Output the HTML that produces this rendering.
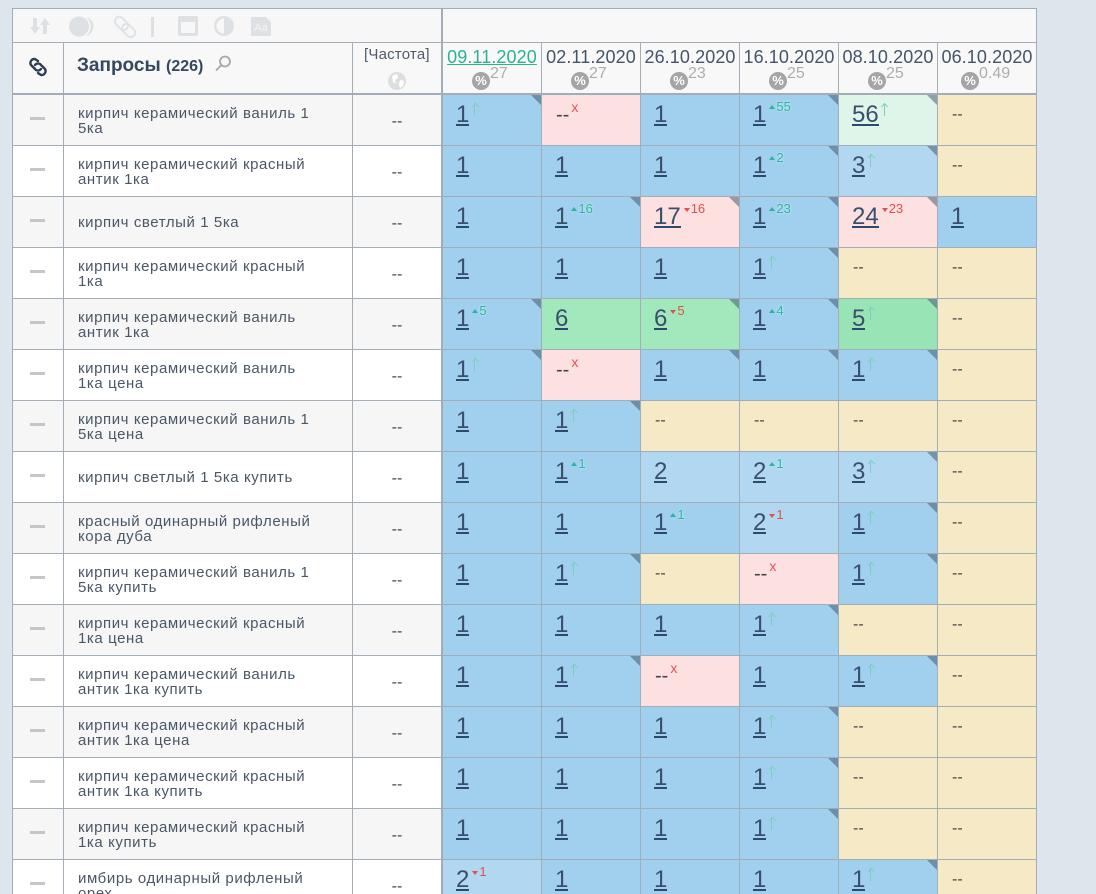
<!DOCTYPE html>
<html><head><meta charset="utf-8"><style>
*{box-sizing:border-box}
html,body{margin:0;padding:0;width:1096px;height:894px;overflow:hidden;background:#dde6ed;font-family:"Liberation Sans",sans-serif;color:#34495e}
#w{position:relative;width:1096px;height:894px;overflow:hidden}
.abs{position:absolute}
.tb{left:12px;top:8px;width:431px;height:35px;background:#f7f7f7;border:1px solid #a3adb7;border-right:2px solid #a3adb7}
.tb2{left:443px;top:8px;width:594px;height:35px;background:#f8f8f9;border:1px solid #a3adb7;border-left:0}
.hd{left:12px;top:42px;width:1025px;height:53px;background:#f8f8f9;border:1px solid #a3adb7;border-top:1px solid #a3adb7;border-bottom:2px solid #a3adb7}
.vl{top:43px;height:50px;width:1px;background:#a3adb7}
.d{top:46px;width:98px;text-align:center;font-size:18px;line-height:22px;color:#44546a;white-space:nowrap;letter-spacing:.1px}
.d.on{color:#2ab391;text-decoration:underline}
.pc{top:72px;width:18px;height:18px;border-radius:50%;background:#a5a5a5;color:#fff;font-size:13px;font-weight:bold;line-height:18px;text-align:center}
.pn{top:65px;font-size:16px;line-height:18px;color:#adadad}
.r{position:absolute;left:12px;width:1025px;height:51px;display:flex;background:#fff;border-bottom:1px solid #a3adb7;border-left:1px solid #a3adb7}
.r.o{background:#f6f6f6}
.k{width:51px;border-right:1px solid #a3adb7;position:relative}
.k:after{content:"";position:absolute;left:17px;top:22px;width:15px;height:3px;background:#c6c6c6}
.q{width:289px;border-right:1px solid #a3adb7;padding:1px 0 0 14px;display:flex;align-items:center;font-size:15px;line-height:15px;letter-spacing:.58px;color:#4a5766;white-space:nowrap}
.f{width:90px;border-right:2px solid #a3adb7;text-align:center;font-size:16px;line-height:54px;color:#444}
.c{width:99px;height:50px;position:relative;display:flex;align-items:flex-start;padding:6px 0 0 13px;white-space:nowrap;border-right:1px solid #a3adb7;background:#a1cfee}
.lb{background:#b2d7f1}.p{background:#fde0e0}.y{background:#f5e9c6}.g{background:#a2e8bd}.h{background:#98e4b4}.m{background:#dff5ea}
.c.y,.c.e{padding-left:14px}
.t:after{content:"";position:absolute;right:0;top:0;border-top:10px solid rgba(60,80,100,.5);border-left:10px solid transparent}
u{display:block;height:23px;font-size:24px;line-height:28px;text-decoration:none;border-bottom:2px solid #2c4a6e;color:#3a4f6c;box-sizing:content-box}
.y span{font-size:16px;line-height:20px;margin-top:4px;color:#444}
.e span{font-size:20px;line-height:24px;margin-top:2px;color:#444}
em{font-style:normal;display:block}
.x{color:#e8505b;font-size:14px;line-height:14px;margin:-1px 0 0 2px}
.a{position:relative;width:7px;height:13px;margin:2px 0 0 2px}
.a:before{content:"";position:absolute;left:3px;top:0;width:1px;height:13px;background:#7ccfc0}
.a:after{content:"";position:absolute;left:1.500px;top:.5px;width:4px;height:4px;border-left:1px solid #7ccfc0;border-top:1px solid #7ccfc0;transform:rotate(45deg)}
.v,.w{font-size:13px;line-height:14px;margin:-1px 0 0 3px;display:flex;align-items:flex-start}
.v{color:#2bb5a0;text-shadow:0 0 2px #d8fff4}
.w{color:#e0504c}
.v:before{content:"";margin:5px 1px 0 0;border-bottom:4px solid #2bb5a0;border-left:3px solid transparent;border-right:3px solid transparent}
.w:before{content:"";margin:6px 1px 0 0;border-top:4px solid #e0504c;border-left:3px solid transparent;border-right:3px solid transparent}
</style></head><body><div id="w">
<div class="abs tb"></div><div class="abs tb2"></div>
<div class="abs hd"></div>
<div class="abs" style="left:441px;top:8px;width:2px;height:87px;background:#a3adb7"></div>
<svg class="abs" style="left:0;top:0" width="300" height="94" fill="none">
<g fill="#dee1e3">
<path d="M33 18h4v9h3l-5 7-5-7h3z"/><path d="M43 34h4v-9h3l-5-7-5 7h3z"/>
<circle cx="79" cy="26.5" r="10"/><path d="M86 17a11 10 0 0 1 0 19a12 12 0 0 0 0-19z"/>
<rect x="151" y="17" width="3" height="20"/>
<path fill-rule="evenodd" d="M180 16h16a2 2 0 0 1 2 2v16a2 2 0 0 1-2 2h-16a2 2 0 0 1-2-2v-16a2 2 0 0 1 2-2zm1 6v11h14v-11z"/>
<path fill-rule="evenodd" d="M224 16a10 10 0 1 1 0 20a10 10 0 0 1 0-20zm0 2.500a7.500 7.500 0 0 0 0 15z"/>
<path d="M251 17h15l5 5v14h-20z"/>
</g>
<g stroke="#e0e3e5" stroke-width="2" transform="rotate(-45 125 27)"><rect x="120.500" y="14.500" width="9" height="15" rx="4.500"/><rect x="120.500" y="24.500" width="9" height="15" rx="4.500"/></g>
<g stroke="#2c3e50" stroke-width="2.400" fill="none" stroke-linecap="round"><path d="M38 61l-3-2a4 4 0 0 0-4 6l5 5a4 4 0 0 0 5-1"/><path d="M38 73l3 2a4 4 0 0 0 4-6l-5-5a4 4 0 0 0-5 1"/></g>
<g stroke="#a8a8a8" stroke-width="1.800" fill="none"><circle cx="225" cy="61.500" r="5"/><path d="M221 65.500l-5 5"/></g>
</svg>
<div class="abs" style="left:251px;top:21px;width:20px;text-align:center;color:#f3f3f3;font-size:11px;line-height:15px">Aa</div>
<div class="abs" style="left:77px;top:54px;font-size:19px;line-height:24px;font-weight:bold;color:#34495e;white-space:nowrap">Запросы <span style="font-size:16px">(226)</span></div>
<div class="abs" style="left:364px;top:46px;font-size:15px;line-height:18px;color:#4f5b69;letter-spacing:.2px;white-space:nowrap">[Частота]</div>
<svg class="abs" style="left:388px;top:72px" width="18" height="18"><circle cx="9" cy="9" r="9" fill="#dcdfe1"/><path d="M4 4l5-2 1 4-3 2 1 4-3-2zM12 8l4 1-1 5-3 2-1-4z" fill="#fff"/></svg>
<div class="abs vl" style="left:63px"></div><div class="abs vl" style="left:352px"></div>
<div class="abs vl" style="left:541px"></div><div class="abs vl" style="left:640px"></div><div class="abs vl" style="left:739px"></div><div class="abs vl" style="left:838px"></div><div class="abs vl" style="left:937px"></div>
<div class="abs d on" style="left:443px">09.11.2020</div><div class="abs d" style="left:542px">02.11.2020</div><div class="abs d" style="left:641px">26.10.2020</div><div class="abs d" style="left:740px">16.10.2020</div><div class="abs d" style="left:839px">08.10.2020</div><div class="abs d" style="left:938px">06.10.2020</div>
<div class="abs pc" style="left:472px">%</div><div class="abs pn" style="left:490px">27</div>
<div class="abs pc" style="left:571px">%</div><div class="abs pn" style="left:589px">27</div>
<div class="abs pc" style="left:670px">%</div><div class="abs pn" style="left:688px">23</div>
<div class="abs pc" style="left:769px">%</div><div class="abs pn" style="left:787px">25</div>
<div class="abs pc" style="left:868px">%</div><div class="abs pn" style="left:886px">25</div>
<div class="abs pc" style="left:961px">%</div><div class="abs pn" style="left:979px">0.49</div>

<div class="r o" style="top:95px"><div class="k"></div><div class="q">кирпич керамический ваниль 1<br>5ка</div><div class="f">--</div><div class="c t"><u>1</u><em class="a"></em></div><div class="c p e"><span>--</span><em class="x">x</em></div><div class="c"><u>1</u></div><div class="c t"><u>1</u><em class="v">55</em></div><div class="c m t"><u>56</u><em class="a"></em></div><div class="c y"><span>--</span></div></div>
<div class="r" style="top:146px"><div class="k"></div><div class="q">кирпич керамический красный<br>антик 1ка</div><div class="f">--</div><div class="c"><u>1</u></div><div class="c"><u>1</u></div><div class="c"><u>1</u></div><div class="c t"><u>1</u><em class="v">2</em></div><div class="c lb t"><u>3</u><em class="a"></em></div><div class="c y"><span>--</span></div></div>
<div class="r o" style="top:197px"><div class="k"></div><div class="q">кирпич светлый 1 5ка</div><div class="f">--</div><div class="c"><u>1</u></div><div class="c t"><u>1</u><em class="v">16</em></div><div class="c p t"><u>17</u><em class="w">16</em></div><div class="c t"><u>1</u><em class="v">23</em></div><div class="c p t"><u>24</u><em class="w">23</em></div><div class="c"><u>1</u></div></div>
<div class="r" style="top:248px"><div class="k"></div><div class="q">кирпич керамический красный<br>1ка</div><div class="f">--</div><div class="c"><u>1</u></div><div class="c"><u>1</u></div><div class="c"><u>1</u></div><div class="c t"><u>1</u><em class="a"></em></div><div class="c y"><span>--</span></div><div class="c y"><span>--</span></div></div>
<div class="r o" style="top:299px"><div class="k"></div><div class="q">кирпич керамический ваниль<br>антик 1ка</div><div class="f">--</div><div class="c t"><u>1</u><em class="v">5</em></div><div class="c g"><u>6</u></div><div class="c g t"><u>6</u><em class="w">5</em></div><div class="c t"><u>1</u><em class="v">4</em></div><div class="c h t"><u>5</u><em class="a"></em></div><div class="c y"><span>--</span></div></div>
<div class="r" style="top:350px"><div class="k"></div><div class="q">кирпич керамический ваниль<br>1ка цена</div><div class="f">--</div><div class="c t"><u>1</u><em class="a"></em></div><div class="c p e"><span>--</span><em class="x">x</em></div><div class="c t"><u>1</u></div><div class="c t"><u>1</u></div><div class="c t"><u>1</u><em class="a"></em></div><div class="c y"><span>--</span></div></div>
<div class="r o" style="top:401px"><div class="k"></div><div class="q">кирпич керамический ваниль 1<br>5ка цена</div><div class="f">--</div><div class="c"><u>1</u></div><div class="c t"><u>1</u><em class="a"></em></div><div class="c y"><span>--</span></div><div class="c y"><span>--</span></div><div class="c y"><span>--</span></div><div class="c y"><span>--</span></div></div>
<div class="r" style="top:452px"><div class="k"></div><div class="q">кирпич светлый 1 5ка купить</div><div class="f">--</div><div class="c"><u>1</u></div><div class="c"><u>1</u><em class="v">1</em></div><div class="c lb"><u>2</u></div><div class="c lb"><u>2</u><em class="v">1</em></div><div class="c lb t"><u>3</u><em class="a"></em></div><div class="c y"><span>--</span></div></div>
<div class="r o" style="top:503px"><div class="k"></div><div class="q">красный одинарный рифленый<br>кора дуба</div><div class="f">--</div><div class="c"><u>1</u></div><div class="c"><u>1</u></div><div class="c"><u>1</u><em class="v">1</em></div><div class="c lb"><u>2</u><em class="w">1</em></div><div class="c t"><u>1</u><em class="a"></em></div><div class="c y"><span>--</span></div></div>
<div class="r" style="top:554px"><div class="k"></div><div class="q">кирпич керамический ваниль 1<br>5ка купить</div><div class="f">--</div><div class="c"><u>1</u></div><div class="c t"><u>1</u><em class="a"></em></div><div class="c y"><span>--</span></div><div class="c p e"><span>--</span><em class="x">x</em></div><div class="c t"><u>1</u><em class="a"></em></div><div class="c y"><span>--</span></div></div>
<div class="r o" style="top:605px"><div class="k"></div><div class="q">кирпич керамический красный<br>1ка цена</div><div class="f">--</div><div class="c"><u>1</u></div><div class="c"><u>1</u></div><div class="c"><u>1</u></div><div class="c t"><u>1</u><em class="a"></em></div><div class="c y"><span>--</span></div><div class="c y"><span>--</span></div></div>
<div class="r" style="top:656px"><div class="k"></div><div class="q">кирпич керамический ваниль<br>антик 1ка купить</div><div class="f">--</div><div class="c"><u>1</u></div><div class="c t"><u>1</u><em class="a"></em></div><div class="c p e"><span>--</span><em class="x">x</em></div><div class="c"><u>1</u></div><div class="c t"><u>1</u><em class="a"></em></div><div class="c y"><span>--</span></div></div>
<div class="r o" style="top:707px"><div class="k"></div><div class="q">кирпич керамический красный<br>антик 1ка цена</div><div class="f">--</div><div class="c"><u>1</u></div><div class="c"><u>1</u></div><div class="c"><u>1</u></div><div class="c t"><u>1</u><em class="a"></em></div><div class="c y"><span>--</span></div><div class="c y"><span>--</span></div></div>
<div class="r" style="top:758px"><div class="k"></div><div class="q">кирпич керамический красный<br>антик 1ка купить</div><div class="f">--</div><div class="c"><u>1</u></div><div class="c"><u>1</u></div><div class="c"><u>1</u></div><div class="c t"><u>1</u><em class="a"></em></div><div class="c y"><span>--</span></div><div class="c y"><span>--</span></div></div>
<div class="r o" style="top:809px"><div class="k"></div><div class="q">кирпич керамический красный<br>1ка купить</div><div class="f">--</div><div class="c"><u>1</u></div><div class="c"><u>1</u></div><div class="c"><u>1</u></div><div class="c t"><u>1</u><em class="a"></em></div><div class="c y"><span>--</span></div><div class="c y"><span>--</span></div></div>
<div class="r" style="top:860px"><div class="k"></div><div class="q">имбирь одинарный рифленый<br>орех</div><div class="f">--</div><div class="c lb"><u>2</u><em class="w">1</em></div><div class="c"><u>1</u></div><div class="c"><u>1</u></div><div class="c"><u>1</u></div><div class="c t"><u>1</u><em class="a"></em></div><div class="c y"><span>--</span></div></div>
</div></body></html>
